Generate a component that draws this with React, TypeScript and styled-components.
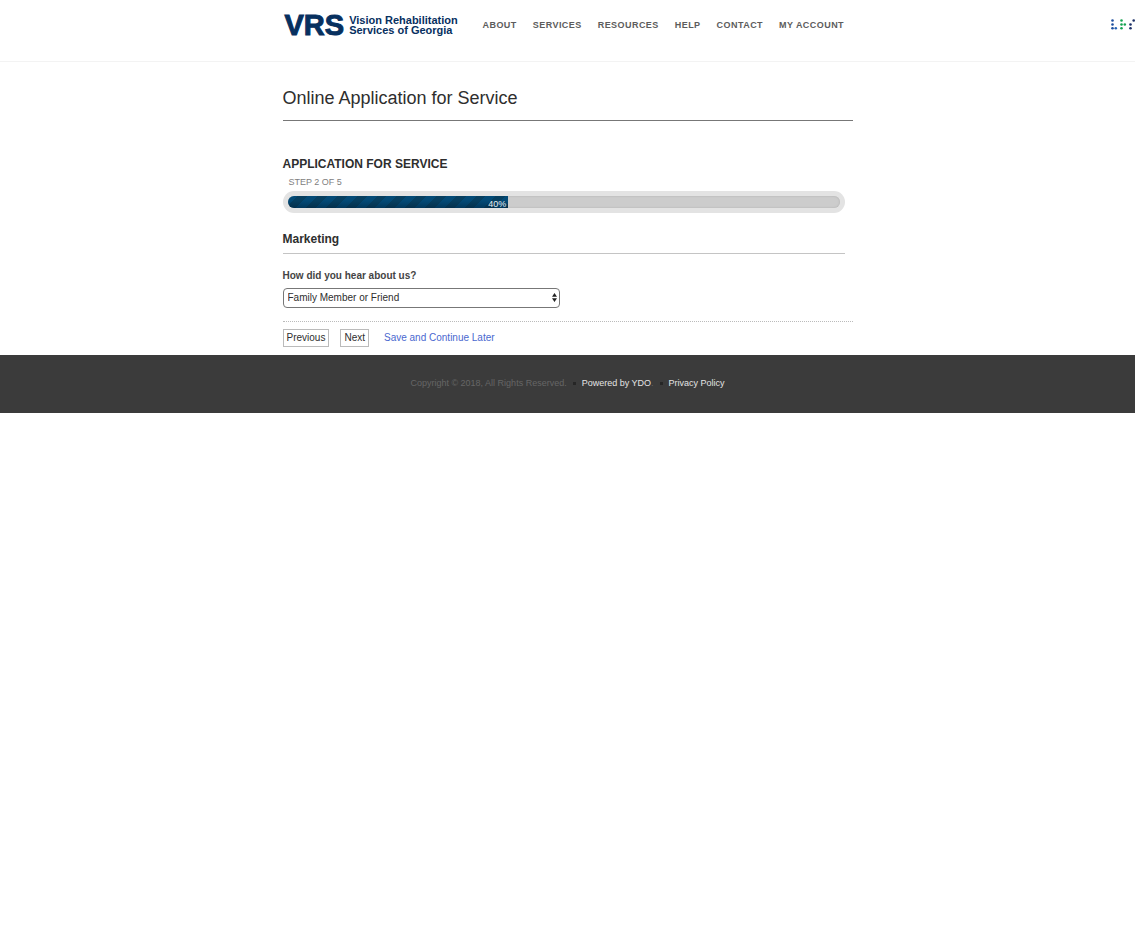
import React from 'react';
import styled, { createGlobalStyle } from 'styled-components';

const GlobalStyle = createGlobalStyle`
  *, *::before, *::after { box-sizing: border-box; }
  body {
    margin: 0;
    background: #fff;
    color: #2e2e2e;
    font-family: Arial, "Liberation Sans", sans-serif;
    font-size: 10px;
    line-height: 12px;
  }
`;

const Header = styled.header`
  display: grid;
  grid-template-columns: 1fr minmax(0, 570px) 1fr;
  align-items: start;
  padding: 13px 0 24px;
  border-bottom: 1px solid #f3f3f3;
`;

const HeaderMain = styled.div`
  grid-column: 2;
  display: flex;
  align-items: center;
`;

const Logo = styled.a`
  display: flex;
  align-items: center;
  flex: none;
  gap: 5px;
  width: 200px;
  padding-left: 2px;
  height: 24px;
  color: #07305f;
  font-weight: bold;
  text-decoration: none;
`;

const LogoMark = styled.span`
  font-size: 29px;
  line-height: 24px;
  -webkit-text-stroke: 1px #07305f;
`;

const LogoName = styled.span`
  font-size: 11px;
  line-height: 10px;
  white-space: nowrap;
`;

const NavList = styled.ul`
  display: flex;
  gap: 16px;
  margin: 0;
  padding: 0;
  list-style: none;
`;

const NavLink = styled.a`
  color: #5c5c5c;
  font-size: 9px;
  font-weight: bold;
  letter-spacing: 0.05em;
  text-decoration: none;
  text-transform: uppercase;
  white-space: nowrap;
`;

const Braille = styled.svg`
  justify-self: end;
  display: block;
  margin-top: 5px;
`;

const Container = styled.main`
  max-width: 570px;
  margin: 0 auto;
  padding-bottom: 8px;
`;

const PageTitle = styled.h1`
  margin: 0 0 35px;
  padding: 24px 0 10px;
  border-bottom: 1px solid #777;
  font-size: 18px;
  line-height: 24px;
  font-weight: normal;
`;

const FormBody = styled.div`
  padding-right: 8px;
`;

const FormTitle = styled.h2`
  margin: 0;
  font-size: 12px;
  line-height: 16px;
`;

const Step = styled.p`
  margin: 4px 0 3px;
  padding-left: 6px;
  color: #808080;
  font-size: 9px;
  text-transform: uppercase;
`;

const Track = styled.div`
  padding: 5px;
  border-radius: 11px;
  background: #e3e3e3;
`;

const Groove = styled.div`
  height: 12px;
  border-radius: 6px;
  overflow: hidden;
  background: #ccc;
  box-shadow: inset 0 0 2px #aaa;
`;

const Fill = styled.div<{ $percent: number }>`
  width: ${({ $percent }) => $percent}%;
  height: 12px;
  padding: 2px 2px 0 0;
  background:
    linear-gradient(to bottom, transparent 40%, rgba(0, 20, 40, 0.35)),
    repeating-linear-gradient(135deg, #034a76 0 7px, #063f60 7px 14px);
  color: #e6eef2;
  font-size: 9px;
  text-align: right;
`;

const SectionTitle = styled.h3`
  margin: 18px 0 16px;
  padding-bottom: 6px;
  border-bottom: 1px solid #c4c4c4;
  font-size: 12px;
  line-height: 16px;
`;

const Label = styled.label`
  display: block;
  margin-bottom: 6px;
  color: #444;
  font-weight: bold;
`;

const SelectBox = styled.div`
  position: relative;
  max-width: 277px;
`;

const Select = styled.select`
  appearance: none;
  display: block;
  width: 100%;
  height: 20px;
  padding: 0 12px 0 4px;
  border: 1px solid #777;
  border-radius: 4px;
  background: #fff;
  color: #2e2e2e;
  font: inherit;
`;

const Arrows = styled.svg`
  position: absolute;
  right: 3px;
  top: 5px;
  pointer-events: none;
`;

const Actions = styled.div`
  display: flex;
  align-items: center;
  margin-top: 13px;
  padding-top: 7px;
  border-top: 1px dotted #bbb;
`;

const Button = styled.button`
  height: 18px;
  margin-right: 11px;
  padding: 0 3px;
  border: 1px solid #bbb;
  background: #fff;
  color: #2e2e2e;
  font: inherit;
`;

const SaveLink = styled.a`
  margin-left: 4px;
  color: #4a68cf;
  text-decoration: none;
`;

const Footer = styled.footer`
  padding: 22px 0 24px;
  background: #3b3b3b;
`;

const FooterList = styled.ul`
  display: flex;
  justify-content: center;
  margin: 0;
  padding: 0;
  list-style: none;
  color: #666;
  font-size: 9px;
`;

const FooterItem = styled.li`
  display: flex;
  align-items: center;

  & + &::before {
    content: "";
    width: 3px;
    height: 3px;
    margin: 0 6px;
    background: #262626;
  }
`;

const FooterLink = styled.a`
  color: #e4e4e4;
  text-decoration: none;
`;

const navItems = ['About', 'Services', 'Resources', 'Help', 'Contact', 'My Account'];

const dots: [number, number, string][] = [
  [2.5, 2.5, '#1d4f9e'], [2.5, 6.5, '#1d4f9e'], [2.5, 10.2, '#1d4f9e'], [5.8, 10.2, '#2563b5'],
  [11.5, 2.5, '#16a352'], [11.5, 6.5, '#16a352'], [11.5, 10.2, '#16a352'], [14.8, 6.5, '#16a352'],
  [20.5, 6.5, '#1b2f66'], [20.5, 10.2, '#1b2f66'], [23.7, 2.5, '#1b2f66'],
];

const percent = 40;

export default function App() {
  return (
    <>
      <GlobalStyle />
      <Header>
        <HeaderMain>
          <Logo href="#">
            <LogoMark>VRS</LogoMark>
            <LogoName>
              Vision Rehabilitation
              <br />
              Services of Georgia
            </LogoName>
          </Logo>
          <nav>
            <NavList>
              {navItems.map((item) => (
                <li key={item}>
                  <NavLink href="#">{item}</NavLink>
                </li>
              ))}
            </NavList>
          </nav>
        </HeaderMain>
        <Braille width="25" height="13" viewBox="0 0 25 13" aria-hidden="true">
          {dots.map(([x, y, color]) => (
            <circle key={`${x}-${y}`} cx={x} cy={y} r="1.3" fill={color} />
          ))}
        </Braille>
      </Header>

      <Container>
        <PageTitle>Online Application for Service</PageTitle>
        <form onSubmit={(e) => e.preventDefault()}>
          <FormBody>
            <FormTitle>APPLICATION FOR SERVICE</FormTitle>
            <Step>Step 2 of 5</Step>
            <Track role="progressbar" aria-label="Progress" aria-valuenow={percent} aria-valuemin={0} aria-valuemax={100}>
              <Groove>
                <Fill $percent={percent}>{percent}%</Fill>
              </Groove>
            </Track>
            <SectionTitle>Marketing</SectionTitle>
            <Label htmlFor="source">How did you hear about us?</Label>
            <SelectBox>
              <Select id="source" defaultValue="family">
                <option value="family">Family Member or Friend</option>
              </Select>
              <Arrows width="5" height="9" viewBox="0 0 5 9" aria-hidden="true">
                <path d="M2.5 0 5 3.7H0ZM2.5 9 0 5.3H5Z" fill="#222" />
              </Arrows>
            </SelectBox>
          </FormBody>
          <Actions>
            <Button type="button">Previous</Button>
            <Button type="submit">Next</Button>
            <SaveLink href="#">Save and Continue Later</SaveLink>
          </Actions>
        </form>
      </Container>

      <Footer>
        <FooterList>
          <FooterItem>Copyright © 2018, All Rights Reserved.</FooterItem>
          <FooterItem>
            <FooterLink href="#">Powered by YDO</FooterLink>.
          </FooterItem>
          <FooterItem>
            <FooterLink href="#">Privacy Policy</FooterLink>
          </FooterItem>
        </FooterList>
      </Footer>
    </>
  );
}
